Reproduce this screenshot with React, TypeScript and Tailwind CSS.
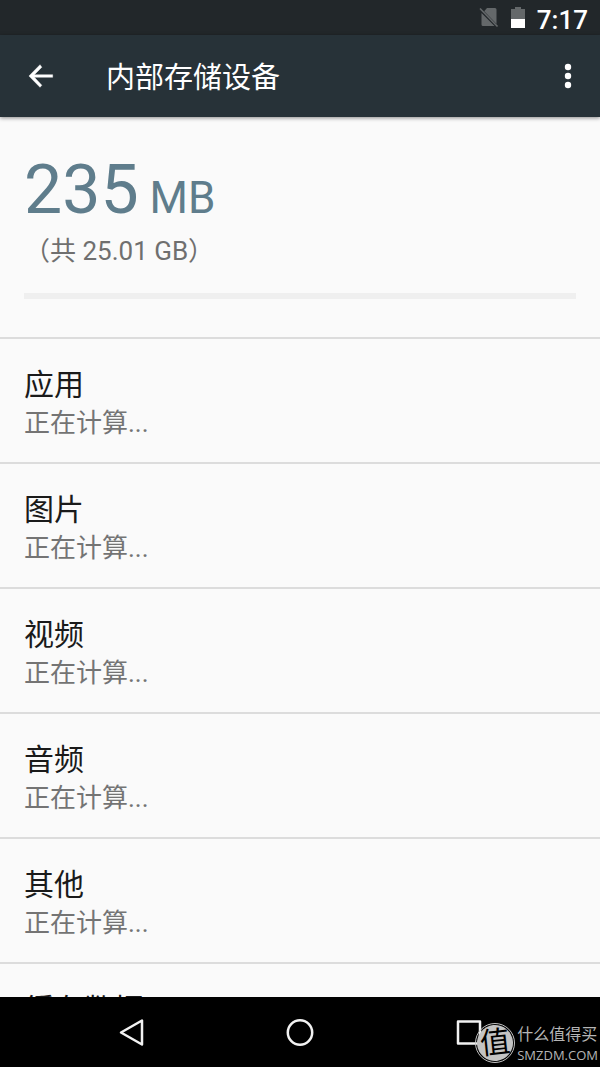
const categories = ["应用", "图片", "视频", "音频", "其他", "缓存数据"];

function StatusBar() {
  return (
    <div className="flex h-[35px] shrink-0 items-center justify-end bg-[#22272a] pt-1 pr-3 text-white">
      <svg viewBox="0 0 20 22" className="mr-3 mb-1.5 h-[22px] w-5" aria-hidden="true">
        <path d="M8 2h8a1.500 1.500 0 0 1 1.500 1.500v14.500L5.200 5.200zM2.500 7v11.500A1.500 1.500 0 0 0 4 20h11.500z" fill="#64686a" />
        <path d="M1 2.500 18.500 20.500" stroke="#64686a" strokeWidth="1.600" />
      </svg>
      <svg viewBox="0 0 14 22" className="mr-3 mb-1.5 h-[22px] w-[14px]" aria-hidden="true">
        <path d="M4 1h6v2h4v10H0V3h4z" fill="#64686a" />
        <path d="M0 13h14v9H0z" fill="#fff" />
      </svg>
      <span className="text-[26px] leading-8 font-medium">7:17</span>
    </div>
  );
}

function Toolbar() {
  return (
    <header className="z-10 flex h-[82px] shrink-0 items-center bg-[#273238] pr-5 pl-6 text-white shadow-[0_1px_4px_rgba(0,0,0,0.45)]">
      <button type="button" aria-label="返回" className="flex size-8 items-center justify-center">
        <svg viewBox="0 0 24 24" className="size-8 shrink-0" aria-hidden="true">
          <path d="M21.500 11H7.800l5.600-5.600L12 3.500 3.700 12l8.300 8.500 1.400-1.600L7.800 13h13.700z" fill="currentColor" stroke="currentColor" strokeWidth="0.300" />
        </svg>
      </button>
      <h1 className="ml-[50px] grow pt-1 text-[29px] leading-10">内部存储设备</h1>
      <button type="button" aria-label="更多选项" className="flex h-8 w-6 items-center justify-center">
        <svg viewBox="0 0 8 26" className="h-[26px] w-2" aria-hidden="true">
          <circle cx="4" cy="4" r="3.200" fill="currentColor" />
          <circle cx="4" cy="13" r="3.200" fill="currentColor" />
          <circle cx="4" cy="22" r="3.200" fill="currentColor" />
        </svg>
      </button>
    </header>
  );
}

function Summary() {
  return (
    <section className="h-[220px] px-6 pt-8">
      <p className="text-[68px] leading-[82px] text-[#5f7d8c]">
        235<span className="text-[44px] leading-none"> MB</span>
      </p>
      <p className="mt-1 text-[26px] leading-8 text-[#6f6f6f]">（共 25.01 GB）</p>
      <div className="mt-[26px] h-[6px] bg-[#efefef]" />
    </section>
  );
}

function NavigationBar() {
  return (
    <nav className="relative flex h-[70px] shrink-0 items-center justify-center gap-[136px] bg-black text-[#f2f2f2]">
      <button type="button" aria-label="返回" className="size-8">
        <svg viewBox="0 0 32 32" className="size-8" fill="none" stroke="currentColor" strokeWidth="2.500" strokeLinejoin="round">
          <path d="M26 4.500v24L5 16.500z" />
        </svg>
      </button>
      <button type="button" aria-label="主屏幕" className="size-8">
        <svg viewBox="0 0 32 32" className="size-8" fill="none" stroke="currentColor" strokeWidth="2.500">
          <circle cx="16" cy="16.500" r="12.200" />
        </svg>
      </button>
      <button type="button" aria-label="最近任务" className="size-8">
        <svg viewBox="0 0 32 32" className="size-8" fill="none" stroke="currentColor" strokeWidth="2.500" strokeLinejoin="round">
          <path d="M6 5.500h22v22h-22z" />
        </svg>
      </button>
      <div className="absolute right-[2px] bottom-1 flex items-center gap-[2px] text-[#b5b5b5]">
        <span className="flex size-10 items-center justify-center rounded-full border border-[#c4c4c4] p-px">
          <span className="flex size-9 -rotate-6 items-center justify-center rounded-full bg-[#c4c4c4] text-[30px] leading-9 text-black">
            值
          </span>
        </span>
        <span className="flex flex-col">
          <span className="text-[16px] leading-6">什么值得买</span>
          <span className="font-['Open_Sans'] text-[13px] leading-4">SMZDM.COM</span>
        </span>
      </div>
    </nav>
  );
}

export default function App() {
  return (
    <div className="flex h-screen flex-col overflow-hidden bg-[#fafafa] font-[Roboto,'Noto_Sans_CJK_SC',sans-serif]">
      <StatusBar />
      <Toolbar />
      <main className="min-h-0 grow overflow-hidden">
        <Summary />
        <ul>
          {categories.map((name) => (
            <li key={name} className="h-[125px] border-t-2 border-[#dcdcdc] px-6 pt-[26px]">
              <p className="text-[30px] leading-10 text-[#1a1a1a]">{name}</p>
              <p className="text-[26px] leading-9 text-[#747474]">正在计算...</p>
            </li>
          ))}
        </ul>
      </main>
      <NavigationBar />
    </div>
  );
}
